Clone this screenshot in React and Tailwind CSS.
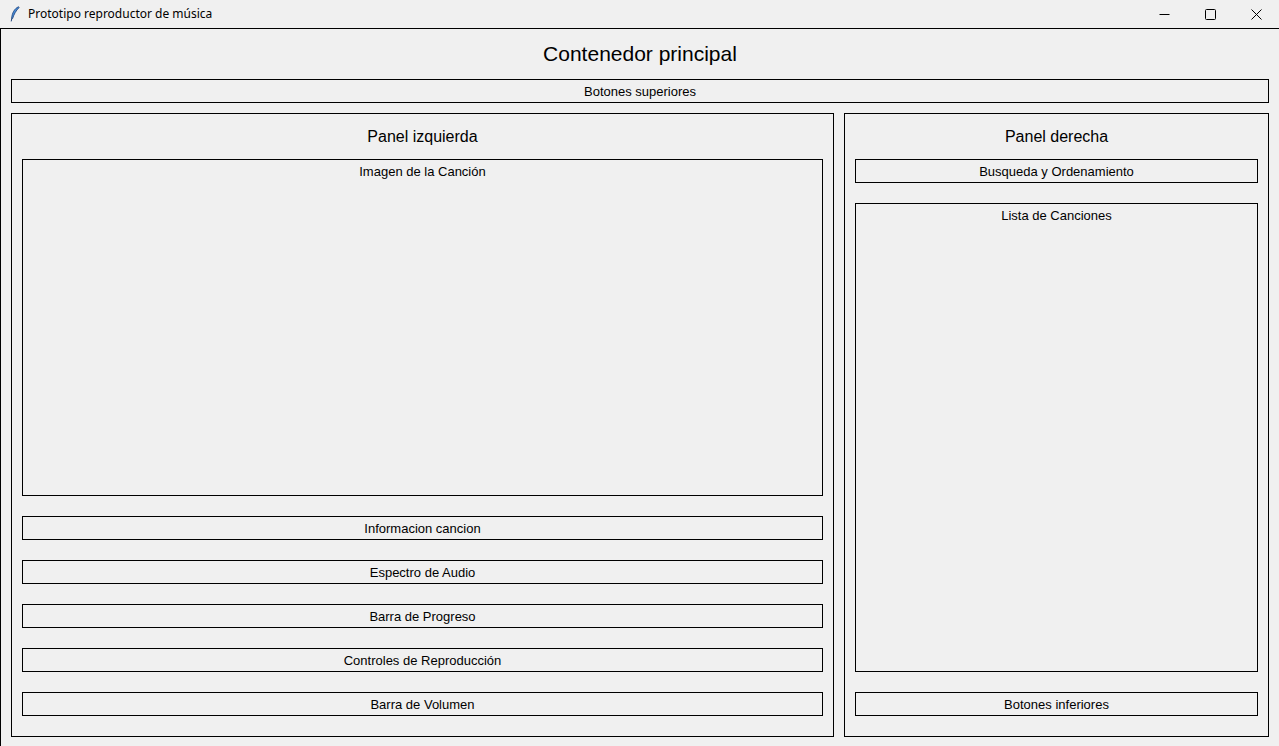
export default function App() {
  const font = { fontFamily: '"Liberation Sans", Arial, sans-serif' }
  const Box = ({ label, className = '' }) => (
    <div className={`border border-black flex justify-center pt-[4px] text-[13px] leading-[16px] text-black ${className}`}>
      {label}
    </div>
  )

  return (
    <div className="h-[746px] w-[1279px] overflow-hidden bg-[#f0f0f0] flex flex-col" style={font}>
      {/* Title bar */}
      <div className="h-[28px] flex items-center bg-[#f0f0f0] shrink-0">
        <svg width="10" height="16" viewBox="0 0 10 16" className="ml-[10px]">
          <path d="M8.5 0.8 C4.5 2.5 2 7 1.6 12.5 L2.6 12.6 C3.8 8.5 6 4.5 9.2 1.4 Z" fill="#4a8fdc" stroke="#1c3f77" strokeWidth="0.8" />
          <path d="M1.8 12.4 L1.2 15.4" stroke="#1c3f77" strokeWidth="1" />
        </svg>
        <span className="ml-[8px] text-[12px] text-black" style={{ fontFamily: '"Noto Sans", "Open Sans", sans-serif' }}>
          Prototipo reproductor de música
        </span>
        <div className="ml-auto flex items-center h-full">
          <div className="w-[46px] h-full flex items-center justify-center">
            <svg width="11" height="11" viewBox="0 0 11 11"><path d="M0.5 5.5 H10.5" stroke="#000" strokeWidth="1" /></svg>
          </div>
          <div className="w-[46px] h-full flex items-center justify-center">
            <svg width="11" height="11" viewBox="0 0 11 11"><rect x="0.5" y="0.5" width="10" height="10" rx="1" fill="none" stroke="#000" strokeWidth="1" /></svg>
          </div>
          <div className="w-[46px] h-full flex items-center justify-center">
            <svg width="11" height="11" viewBox="0 0 11 11"><path d="M0.5 0.5 L10.5 10.5 M10.5 0.5 L0.5 10.5" stroke="#000" strokeWidth="1" /></svg>
          </div>
        </div>
      </div>

      {/* Contenedor principal */}
      <div className="flex-1 border-l border-t border-black pl-[10px] pr-[10px] flex flex-col">
        <div className="h-[50px] flex items-center justify-center text-[21px] text-black">Contenedor principal</div>
        <Box label="Botones superiores" className="h-[24px]" />

        <div className="mt-[10px] flex gap-[10px]">
          {/* Panel izquierda */}
          <div className="w-[823px] h-[624px] border border-black px-[10px] flex flex-col">
            <div className="h-[45px] flex items-center justify-center text-[16px] text-black">Panel izquierda</div>
            <Box label="Imagen de la Canción" className="h-[337px]" />
            <div className="mt-[20px] flex flex-col gap-[20px]">
              <Box label="Informacion cancion" className="h-[24px]" />
              <Box label="Espectro de Audio" className="h-[24px]" />
              <Box label="Barra de Progreso" className="h-[24px]" />
              <Box label="Controles de Reproducción" className="h-[24px]" />
              <Box label="Barra de Volumen" className="h-[24px]" />
            </div>
          </div>

          {/* Panel derecha */}
          <div className="w-[425px] h-[624px] border border-black px-[10px] flex flex-col">
            <div className="h-[45px] flex items-center justify-center text-[16px] text-black">Panel derecha</div>
            <Box label="Busqueda y Ordenamiento" className="h-[24px]" />
            <Box label="Lista de Canciones" className="h-[469px] mt-[20px]" />
            <Box label="Botones inferiores" className="h-[24px] mt-[20px]" />
          </div>
        </div>
      </div>
    </div>
  )
}
